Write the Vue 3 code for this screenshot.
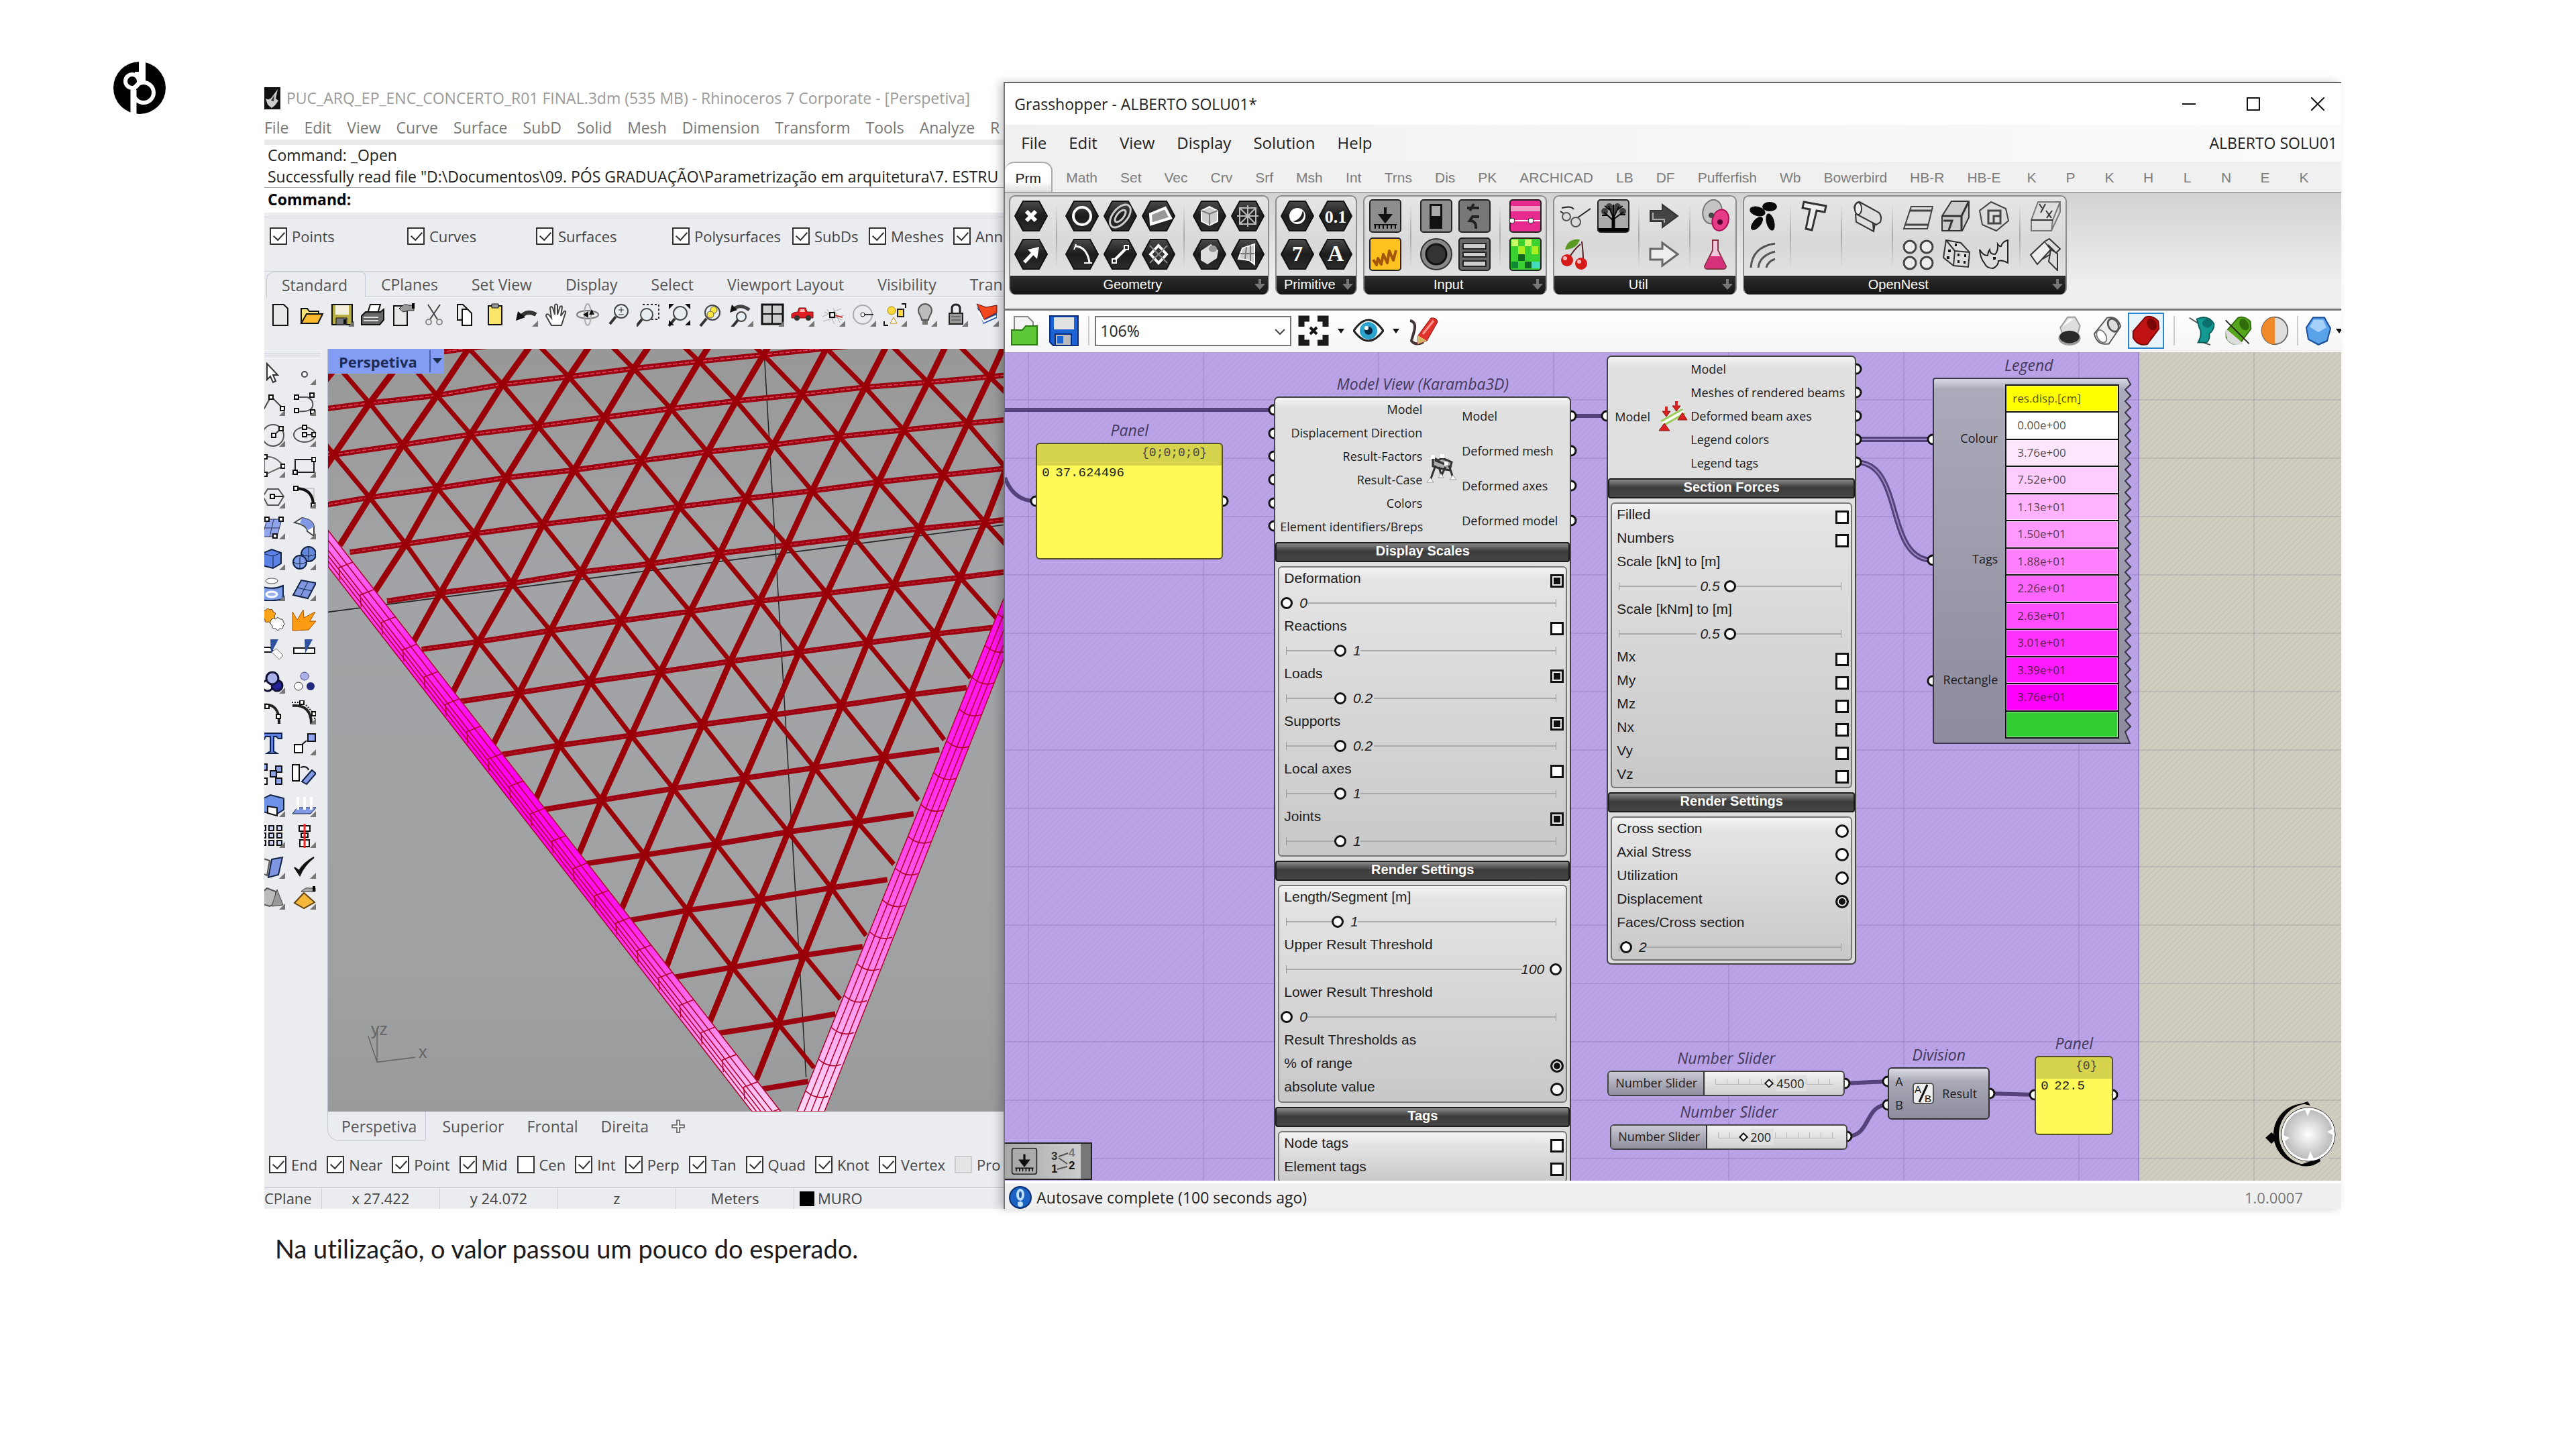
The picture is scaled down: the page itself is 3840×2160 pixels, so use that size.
<script setup>
const menus = ['File', 'Edit', 'View', 'Curve', 'Surface', 'SubD', 'Solid', 'Mesh', 'Dimension', 'Transform', 'Tools', 'Analyze', 'R']
const filters = ['Points', 'Curves', 'Surfaces', 'Polysurfaces', 'SubDs', 'Meshes', 'Ann']
const toolTabs = ['Standard', 'CPlanes', 'Set View', 'Display', 'Select', 'Viewport Layout', 'Visibility', 'Tran']
const viewTabs = ['Perspetiva', 'Superior', 'Frontal', 'Direita']
const snaps = ['End', 'Near', 'Point', 'Mid', 'Cen', 'Int', 'Perp', 'Tan', 'Quad', 'Knot', 'Vertex', 'Pro']
const status = ['x 27.422', 'y 24.072', 'z', 'Meters']

const more = '<path d="M36 27v9h-9z" fill="#777"/>'
const glass = (x, y, r) => `<path d="M${x - r + 2} ${y + r - 2}L${x - r - 7} ${y + r + 9}" stroke="#333" stroke-width="4"/><circle cx="${x}" cy="${y}" r="${r}" fill="#e9eef2" stroke="#444" stroke-width="2"/>`
const sheet = (x, y, w, h, f) => `<path d="M${x} ${y}h${w - 6}l6 6v${h - 6}h-${w}z" fill="${f}" stroke="#111" stroke-width="2"/>`
const toolbar = [
  sheet(7, 3, 22, 31, '#e8e8e8'),
  '<path d="M3 31V9h9l3 4h14v5" fill="#f6e27a" stroke="#111" stroke-width="2"/><path d="M3 31l8-14h24l-7 14z" fill="#fbb92f" stroke="#111" stroke-width="2"/>',
  '<path d="M3 3h30v30H3z" fill="#b7ad45" stroke="#111" stroke-width="2"/><path d="M8 4h20v14H8z" fill="#f3f1dc"/><path d="M9 23h16v10H9z" fill="#777" stroke="#111"/><path d="M20 25h4v7h-4z" fill="#111"/>' + more,
  '<path d="M11 16l4-13h15l-4 13z" fill="#fff" stroke="#111" stroke-width="2"/><path d="M2 20l6-6h22l5-4v16l-6 7H2z" fill="#666" stroke="#111" stroke-width="2"/><path d="M5 22h22M5 27h22" stroke="#ddd" stroke-width="2"/>',
  sheet(4, 5, 20, 29, '#e8e8e8') + '<path d="M12 9q8-9 14-5h8v8h-8l-8 2z" fill="#999" stroke="#222"/><path d="M31 1h4v8h-4z" fill="#000"/>',
  '<path d="M9 3l14 22M27 3L12 25" stroke="#444" stroke-width="2"/><circle cx="10" cy="29" r="4" fill="none" stroke="#888" stroke-width="2"/><circle cx="26" cy="29" r="4" fill="none" stroke="#888" stroke-width="2"/>',
  sheet(7, 3, 14, 23, '#eee') + sheet(14, 10, 14, 24, '#fff'),
  '<path d="M8 5h20v28H8z" fill="#fbe569" stroke="#111" stroke-width="2"/><path d="M13 2h10v6H13z" fill="#999" stroke="#111"/>',
  '<path d="M10 22q9-12 23-4" fill="none" stroke="#333" stroke-width="6"/><path d="M3 27l3-14 11 9z" fill="#111"/>' + more,
  '<path d="M10 34L2 20q0-4 4-2l4 5L8 8q1-4 4 0l3 10V4q2-3 4 0v14l4-12q3-2 3 1l-2 13 5-7q3-1 2 2l-6 19z" fill="#fff" stroke="#444" stroke-width="2"/>',
  '<ellipse cx="18" cy="18" rx="16" ry="6" fill="none" stroke="#777" stroke-width="2"/><ellipse cx="18" cy="18" rx="5" ry="16" fill="none" stroke="#aaa" stroke-width="2"/><path d="M11 18l8-5v10zM24 10l4 8h-8z" fill="#111"/>',
  glass(22, 13, 10) + '<path d="M18 11h8M22 7v8M18 18h8" stroke="#222" stroke-width="1"/>',
  glass(15, 18, 9) + '<path d="M9 3h24v22H22" fill="none" stroke="#222" stroke-width="2" stroke-dasharray="3 3"/>',
  glass(19, 16, 10) + '<path d="M2 2h8l-8 8zM34 2h-8l8 8zM2 34h8l-8-8zM34 34h-8l8-8z" fill="#111"/>',
  glass(21, 15, 11) + '<circle cx="23" cy="11" r="5" fill="#ffe83b" stroke="#555"/><circle cx="18" cy="18" r="5" fill="#ffe83b" stroke="#555"/>',
  '<path d="M6 10q11-9 24 1" fill="none" stroke="#444" stroke-width="5"/><path d="M1 15L4 3l8 8z" fill="#111"/>' + glass(18, 21, 7) + more,
  '<path d="M3 3h31v29H3z" fill="#ccc" stroke="#111" stroke-width="3"/><path d="M18 3v29M3 17h31" stroke="#111" stroke-width="2"/>' + more,
  '<path d="M2 17q4-3 9-3l2-6h10l2 6h9v9H2z" fill="#e01b22" stroke="#711"/><path d="M15 10h6l1 4h-8z" fill="#fbb"/><circle cx="10" cy="23" r="4" fill="#333"/><circle cx="27" cy="23" r="4" fill="#333"/>' + more,
  '<path d="M2 21L30 9M3 28l31-9M9 10l11 22M18 8l10 22M5 14l26 12" stroke="#aaa" stroke-width="1"/><path d="M17 18l15 4" stroke="#c33" stroke-width="2"/><path d="M13 15h7v7h-7z" fill="#fff" stroke="#111" stroke-width="2"/>' + more,
  '<circle cx="16" cy="18" r="14" fill="none" stroke="#aaa" stroke-width="2"/><path d="M18 18h14" stroke="#333" stroke-width="2"/><circle cx="16" cy="18" r="3" fill="#fff" stroke="#111"/>' + more,
  '<circle cx="13" cy="12" r="6" fill="#ffd83b" stroke="#a80"/><path d="M22 10h9v11h-9z" fill="#ffd83b" stroke="#222" stroke-width="2"/><path d="M16 22l5 9H11z" fill="#fff" stroke="#b80"/><path d="M28 2h6v6M2 28v6h6" fill="none" stroke="#111" stroke-width="2"/>' + more,
  '<path d="M13 26c0-6-5-8-5-14a10 10 0 0120 0c0 6-5 8-5 14z" fill="#bbb" stroke="#555" stroke-width="2"/><path d="M14 27h8v6h-8z" fill="#777"/>' + more,
  '<path d="M12 16v-7q0-6 6-6t6 6v7" fill="none" stroke="#222" stroke-width="3"/><path d="M8 16h20v16H8z" fill="#999" stroke="#222" stroke-width="2"/><path d="M11 21h14M11 26h14" stroke="#444" stroke-width="1"/>' + more,
  '<path d="M3 6l10 26 20-9V12L16 20z" fill="#2455a8"/><path d="M5 12l9 16 18-8" fill="none" stroke="#fff" stroke-width="3"/><path d="M3 2l14 5 16-3v11l-19 10z" fill="#f0481c" stroke="#611"/>' + more
]
const nd = (x, y) => `<path d="M${x - 3} ${y - 3}h6v6h-6z" fill="#fff" stroke="#111" stroke-width="2"/>`
const sq = (x, y, f = '#8fa3e6', w = 9) => `<path d="M${x} ${y}h${w}v${w}h-${w}z" fill="${f}" stroke="#111" stroke-width="2"/>`
const tools = [
  '<path d="M9 4v24l5-5 4 9 4-2-4-9h7z" fill="#fff" stroke="#333" stroke-width="2"/>',
  '<circle cx="19" cy="20" r="4" fill="#fff" stroke="#444" stroke-width="2"/>' + more,
  '<path d="M2 30L15 7l18 18" fill="none" stroke="#444" stroke-width="2"/>' + nd(15, 8) + nd(32, 25) + more,
  '<path d="M7 8h16q10 4 8 14-3 9-24 7" fill="none" stroke="#555" stroke-width="2"/>' + nd(7, 8) + nd(30, 5) + nd(7, 28) + nd(31, 30) + more,
  '<circle cx="18" cy="19" r="16" fill="none" stroke="#555" stroke-width="2"/><path d="M19 19l11-10" stroke="#333" stroke-width="2"/>' + nd(19, 19) + nd(30, 9) + more,
  '<ellipse cx="19" cy="18" rx="16" ry="11" fill="none" stroke="#555" stroke-width="2"/><path d="M19 18h14" stroke="#333" stroke-width="2"/>' + nd(19, 7) + nd(19, 18) + nd(33, 18) + more,
  '<path d="M5 32V5q18-2 28 14z" fill="none" stroke="#666" stroke-width="2"/>' + nd(6, 5) + nd(33, 19) + nd(6, 31) + more,
  '<path d="M5 9h28v19H5z" fill="none" stroke="#222" stroke-width="2"/>' + nd(33, 9) + nd(5, 28) + more,
  '<path d="M10 7h16l8 11-8 13H10L3 18z" fill="none" stroke="#555" stroke-width="2"/><path d="M17 18h16" stroke="#222" stroke-width="2"/>' + nd(17, 18) + more,
  '<path d="M6 6h27v26" fill="none" stroke="#aaa"/><path d="M6 6q26 0 26 26" fill="none" stroke="#111" stroke-width="4"/>' + nd(6, 6) + nd(32, 31) + more,
  '<path d="M9 6h22l-7 26H2z" fill="#91a5ea" stroke="#335" stroke-width="1"/><path d="M5 19h23M19 6l-6 26" stroke="#335" stroke-width="1"/>' + nd(9, 6) + nd(30, 6) + nd(21, 31) + more,
  '<path d="M4 11l11-7q16 2 18 13v14l-10-7q0-9-19-13z" fill="#fff" stroke="#444" stroke-width="2"/><path d="M15 4q16 2 18 13l-10 6q-2-9-11-11z" fill="#7f97e6"/>' + more,
  '<path d="M2 11l14-6 14 5v16l-12 7-16-4z" fill="#5c82e6" stroke="#124" stroke-width="2"/><path d="M2 11l16 4 12-5M18 15v18" fill="none" stroke="#124"/>' + more,
  '<circle cx="25" cy="12" r="11" fill="#6488dc" stroke="#124" stroke-width="2"/><circle cx="12" cy="24" r="10" fill="#7d9be6" stroke="#124" stroke-width="2"/><path d="M14 12q11 6 22 0M25 1v22M2 24q10 5 20 0M12 14v20" fill="none" stroke="#124"/>' + more,
  '<ellipse cx="16" cy="6" rx="9" ry="4" fill="#fff" stroke="#444"/><path d="M0 14q18 6 33-1v20q-16 4-33 1z" fill="#7f9eea" stroke="#124" stroke-width="2"/><ellipse cx="16" cy="26" rx="8" ry="4" fill="#9db4ef" stroke="#fff" stroke-width="3"/>' + more,
  '<path d="M14 5l22 4-12 23-22-5z" fill="#7f97e0" stroke="#124" stroke-width="2"/><path d="M8 16l22 5M24 7L13 29" stroke="#124"/>' + more,
  '<path d="M3 8q-2-6 4-4 2-5 6-1 5-2 5 3 6 1 2 6 2 6-3 6 0 6-6 3-6 2-5-4-6-2-3-9z" fill="#f9a51a" stroke="#742"/><path d="M15 18q4-4 7-1 3-5 6 0 6-1 5 4 4 3 0 6 0 6-5 4-3 5-6 0-6 1-5-4-5-4-2-9z" fill="#fff" stroke="#333"/>',
  '<path d="M1 34V6l7 12L17 3l1 12 17-9-8 14 9 0-11 13z" fill="#fb9c14" stroke="#a50"/>',
  '<path d="M0 13h14l5 7H0z" fill="#fff" stroke="#111" stroke-width="2"/><path d="M14 1h12L15 22z" fill="#2f52a0"/><path d="M16 20l7-5 10 10-6 6z" fill="#fff" stroke="#777"/>',
  '<path d="M3 14h31v8H3z" fill="#fff" stroke="#111" stroke-width="2"/><path d="M19 1h12L20 22z" fill="#2f52a0"/>',
  '<circle cx="10" cy="24" r="8" fill="#fff" stroke="#113" stroke-width="3"/><circle cx="24" cy="24" r="8" fill="#229" stroke="#113" stroke-width="3"/><circle cx="17" cy="13" r="9" fill="#aab0ea" stroke="#113" stroke-width="3"/>' + more,
  '<circle cx="19" cy="10" r="6" fill="#aab0ea" stroke="#448"/><circle cx="10" cy="25" r="6" fill="#fff" stroke="#333"/><circle cx="28" cy="25" r="6" fill="#22287c"/>',
  '<path d="M2 7q26-4 25 28" fill="none" stroke="#222" stroke-width="4"/>' + nd(9, 9) + nd(26, 24),
  '<path d="M1 8q28-2 28 27" fill="none" stroke="#222" stroke-width="4"/><path d="M0 3h16M21 7l13 14v14" fill="none" stroke="#222" stroke-width="2" stroke-dasharray="2 2"/>' + nd(15, 3) + nd(33, 20) + more,
  '<path d="M1 3h30v8h-5l-3-3h-4v22l5 3H9l5-3V8H7l-2 4H1z" fill="#5f82e0" stroke="#124" stroke-width="2"/>',
  '<path d="M4 20h12v12H4zM24 4h11v11H24z" fill="#fff" stroke="#111" stroke-width="2"/><path d="M25 5h9v9h-9z" fill="#93a8ec"/><path d="M15 20l7-6" stroke="#111" stroke-width="2"/>' + more,
  sq(0, 3) + sq(22, 6) + sq(14, 13) + sq(0, 24, '#fff') + sq(22, 24),
  '<path d="M1 4h10v24H1z" fill="#fff" stroke="#111" stroke-width="2"/><path d="M13 8q10-3 12 4" fill="none" stroke="#111" stroke-width="2"/><path d="M15 29l15-17 6 5-14 16z" fill="#8299e6" stroke="#124" stroke-width="2"/>',
  '<path d="M0 10l14-7 20 5v17l-13 8-21-6z" fill="#6e90e6" stroke="#124" stroke-width="2"/><path d="M10 20l14 2v12l-14-4z" fill="#fff" stroke="#111" stroke-width="2"/>' + more,
  '<path d="M8 22h28l-8 9H1z" fill="#8299e6" stroke="#124"/><path d="M9 25V6M19 25V6M29 25V6" stroke="#fff" stroke-width="4"/>' + more,
  [0, 12, 24].map(x => [3, 14, 25].map(y => sq(x, y, '#cfd6f5', 7)).join('')).join('') + more,
  '<path d="M11 3h16v8H11zM14 14h10v6H14zM12 24h14v10H12z" fill="#fff" stroke="#111" stroke-width="2"/><path d="M19 0v36" stroke="#f22" stroke-width="3"/>' + more,
  '<path d="M1 5l12 4-4 22-9-4z" fill="#eee" stroke="#555" stroke-width="2"/><path d="M16 7l16-3-6 26-15 4z" fill="#7f97e0" stroke="#124" stroke-width="2"/>' + more,
  '<path d="M4 19l8 12Q18 16 33 4 18 12 11 24z" fill="#111" stroke="#111" stroke-width="2"/>' + more,
  '<path d="M0 12l9-8 13 5v17l-9 5-13-4z" fill="#bbb" stroke="#555" stroke-width="2"/><path d="M24 6l9 23-17 2z" fill="#999" stroke="#444"/>' + more,
  '<path d="M4 26l14-15 16 14-16 9z" fill="#f5b83a" stroke="#641" stroke-width="2"/><path d="M14 9q7-7 12-5h9v5h-9z" fill="#aaa" stroke="#333"/><path d="M31 1h4v8h-4z" fill="#000"/>' + more
]

/* lattice nodes, apex row first; each entry lists x,y pairs from left to right */
const lattice = [
  [1055, 1208],
  [962, 1105, 1107, 1083],
  [872, 1001, 1018, 982, 1162, 960],
  [785, 900, 930, 880, 1075, 858, 1215, 840],
  [698, 800, 843, 779, 987, 760, 1128, 741, 1268, 722],
  [613, 700, 758, 682, 902, 662, 1043, 645, 1183, 627, 1322, 608],
  [532, 604, 675, 584, 817, 566, 958, 547, 1097, 530, 1235, 513, 1372, 497],
  [450, 511, 595, 491, 737, 473, 877, 456, 1017, 437, 1153, 423, 1288, 408, 1422, 394],
  [373, 422, 517, 405, 657, 384, 797, 369, 937, 350, 1072, 335, 1207, 320, 1340, 305, 1472, 293],
  [303, 333, 442, 314, 580, 297, 717, 282, 855, 265, 990, 250, 1123, 236, 1257, 220, 1388, 207, 1515, 195],
  [230, 248, 367, 231, 505, 212, 643, 198, 778, 181, 912, 165, 1045, 152, 1178, 137, 1308, 125, 1437, 113, 1563, 102],
  [158, 170, 297, 152, 434, 133, 570, 118, 704, 102, 838, 86, 970, 72, 1102, 60, 1230, 47, 1357, 38, 1482, 28, 1606, 17],
  [90, 92, 230, 76, 366, 62, 498, 42, 632, 28, 763, 13, 895, 0, 1025, -12, 1152, -24, 1277, -35, 1402, -45, 1524, -55, 1640, -64],
  [28, 24, 165, 8, 300, -8, 430, -24, 562, -38, 692, -52, 822, -64, 950, -76, 1076, -88, 1200, -99, 1324, -109, 1446, -119, 1564, -128, 1680, -136]
].map(r => r.reduce((a, v, i) => (i % 2 ? a[a.length - 1].push(v) : a.push([v]), a), []))
const rowStart = [[935, 1225], [845, 1123], [750, 1020], [665, 916], [583, 817], [497, 717], [413, 620], [335, 525], [265, 437], [190, 348], [100, 268], [60, 184], [20, 102], [-20, 30]]
const rowEnd = [[1170, 1190], [1225, 1067], [1275, 945], [1328, 825], [1380, 708], [1435, 595], [1490, 485], [1540, 381], [1600, 279]]
const riseStart = [[1010, 1310], [915, 1208], [828, 1107], [738, 1000], [650, 903], [563, 803], [480, 697], [397, 605], [318, 512], [240, 420], [170, 335], [98, 252], [30, 170], [-30, 100]]
const fallEnd = [[1127, 1288], [1180, 1163], [1232, 1047], [1288, 917], [1338, 800], [1390, 690], [1443, 577], [1495, 468], [1545, 365], [1600, 272], [1640, 180], [1680, 95], [1700, 10], [1760, -60]]
const pts = a => a.map(p => p.join(',')).join(' ')
const rows = lattice.map((r, i) => pts([rowStart[i], ...r, ...(rowEnd[i] ? [rowEnd[i]] : [])]))
rows.unshift('1022,1327 1115,1313')
const rises = lattice.map((_, s) => pts([riseStart[s], ...lattice.slice(s).map((r, k) => r[k])]))
const falls = lattice.map((_, j) => pts([fallEnd[j], ...lattice.slice(j).map(r => r[j])]))
const ribs = Array.from({ length: 21 }, (_, i) => {
  const t = i * 43 + 50
  return `M${146 + t} ${308 + t * 1.16}l-28 10l2 22`
}).join('')
const ribsRight = Array.from({ length: 16 }, (_, i) => {
  const y = 460 + i * 58
  const x = 1511 - (y - 430) * 0.446
  return `M${x} ${y}q22 18 46 10`
}).join('')

const ghMenus = ['File', 'Edit', 'View', 'Display', 'Solution', 'Help']
const ghTabs = ['Prm', 'Math', 'Set', 'Vec', 'Crv', 'Srf', 'Msh', 'Int', 'Trns', 'Dis', 'PK', 'ARCHICAD', 'LB', 'DF', 'Pufferfish', 'Wb', 'Bowerbird', 'HB-R', 'HB-E', 'K', 'P', 'K', 'H', 'L', 'N', 'E', 'K']
const hex = s => `<path d="M13 3h24l12 22-12 22H13L1 25z" fill="url(#hexfill)" stroke="#111" stroke-width="2"/>${s}`
const tile = (f, s) => `<rect x="2" y="1" width="46" height="48" rx="4" fill="${f}" stroke="#222" stroke-width="2"/>${s}`
const glyph = (t, size) => `<text x="25" y="35" font-family="Liberation Serif, serif" font-weight="bold" font-size="${size}" fill="#fff" text-anchor="middle">${t}</text>`
const slider = '<path d="M25 12v17M18 24l7 9 7-9z" fill="#111" stroke="#111" stroke-width="4"/><path d="M8 38h34M10 38v6M16 38v6M22 38v6M28 38v6M34 38v6M40 38v6" stroke="#111" stroke-width="2"/>'
const ribbon = [
  { name: 'Geometry', groups: [
    [hex('<path d="M18 18l14 14M32 18L18 32" stroke="#fff" stroke-width="6"/>'), hex('<path d="M15 37l14-15" stroke="#fff" stroke-width="5"/><path d="M20 18l17-4-3 18z" fill="#fff"/>')],
    null,
    [hex('<circle cx="25" cy="25" r="13" fill="none" stroke="#fff" stroke-width="4"/>'), hex('<path d="M14 13q18 0 22 24" fill="none" stroke="#fff" stroke-width="3"/><path d="M28 38h12M13 18l3-8" stroke="#fff" stroke-width="2"/>')],
    [hex('<g transform="rotate(-50 25 25)" fill="none" stroke="#ccc" stroke-width="3"><ellipse cx="25" cy="25" rx="20" ry="11"/><ellipse cx="25" cy="25" rx="11" ry="5"/></g>'), hex('<path d="M16 34l18-18" stroke="#fff" stroke-width="4"/><path d="M13 32h6v6h-6zM31 12h6v6h-6z" fill="#222" stroke="#fff" stroke-width="2"/>')],
    [hex('<path d="M13 22l22-9 8 15-29 9z" fill="#999" stroke="#fff" stroke-width="4"/>'), hex('<path d="M25 12l12 13-12 13-12-13z" fill="#333" stroke="#fff" stroke-width="4"/><path d="M12 12l26 26M38 12L12 38" stroke="#888" stroke-width="2"/>')],
    null,
    [hex('<path d="M13 17l12-6 12 6v16l-12 6-12-6z" fill="#ccc" stroke="#fff" stroke-width="2"/><path d="M13 17l12 5 12-5M25 22v17" fill="none" stroke="#777" stroke-width="2"/>'), hex('<path d="M12 20l15-10 11 9-2 12-14 9-10-6z" fill="#ddd"/><ellipse cx="30" cy="17" rx="6" ry="5" fill="#999"/>')],
    [hex('<path d="M13 13h24v24H13zM25 9v32M9 25h32M13 13l24 24M37 13L13 37" fill="none" stroke="#bbb" stroke-width="2"/>'), hex('<path d="M17 16l18-6v30l-8-6-16-2z" fill="#ccc" stroke="#fff" stroke-width="2"/><path d="M23 14l-2 18M29 12v23M14 24h21" stroke="#777" stroke-width="2"/>')]
  ] },
  { name: 'Primitive', groups: [
    [hex('<circle cx="25" cy="25" r="12" fill="#fff"/><path d="M33 17a12 11 0 01-15 16q12-2 15-16z" fill="#222"/>'), hex(glyph('7', 32))],
    [hex(glyph('0.1', 26)), hex(glyph('A', 34))]
  ] },
  { name: 'Input', groups: [
    [tile('#8d8d8d', slider), tile('#fcc21f', '<path d="M7 33l5 8 2-10 5 9 3-15 6 13 3-18 6 14 4-15" fill="none" stroke="#a3560c" stroke-width="4" stroke-linejoin="round"/>')],
    null,
    [tile('#8d8d8d', '<path d="M15 7h19v37H15z" fill="#111"/><path d="M18 10h13v15H18z" fill="#aaa"/>'), '<circle cx="25" cy="25" r="23" fill="#888" stroke="#333" stroke-width="2"/><circle cx="25" cy="25" r="15" fill="#333" stroke="#111" stroke-width="3"/>'],
    [tile('#777', '<path d="M14 13h18M24 7l-6 10M32 26H22l-4 6q10 0 9 12" fill="none" stroke="#222" stroke-width="4"/>'), tile('#666', '<path d="M8 9h34v8H8zM8 22h34v7H8zM8 35h34v8H8z" fill="#ccc" stroke="#222" stroke-width="2"/>')],
    null,
    [tile('#e62a8e', '<path d="M3 10h44v8H3z" fill="#f0a0c8"/><path d="M3 32h44" stroke="#fff" stroke-width="2"/><circle cx="5" cy="32" r="4" fill="#fff" stroke="#222"/><circle cx="33" cy="32" r="4" fill="#fff" stroke="#222"/>'), tile('#3bd130', '<path d="M4 3h10v10H4zM24 3h10v10H24z" fill="#cf6"/><path d="M14 13h10v12H14zM34 13h10v12H34z" fill="#ae2"/><path d="M14 25h10v10H14zM24 36h10v10H24z" fill="#162"/><path d="M4 36h10v10H4z" fill="#183"/><path d="M34 36h12v10H34z" fill="#4db"/>')]
  ] },
  { name: 'Util', groups: [
    ['<path d="M3 18l12 8M5 13q14-4 18 2M28 28l20-14" stroke="#222" stroke-width="2" fill="none"/><circle cx="12" cy="26" r="6" fill="#ddd" stroke="#555" stroke-width="2"/><circle cx="26" cy="34" r="7" fill="#ddd" stroke="#555" stroke-width="2"/>', '<path d="M35 6q2 16 2 26M33 10q-10 8-18 22" fill="none" stroke="#522" stroke-width="2"/><path d="M10 18Q14 1 32 3 28 17 10 18z" fill="#5a9a22"/><circle cx="13" cy="34" r="9" fill="#d61a1a"/><circle cx="34" cy="39" r="9" fill="#d61a1a"/><circle cx="10" cy="31" r="3" fill="#fbb"/><circle cx="31" cy="36" r="3" fill="#fbb"/>'],
    [tile('#aaa', '<path d="M3 43h44v5H3z" fill="#000"/><path d="M25 45V27" stroke="#000" stroke-width="5"/><path d="M25 32L11 19M25 30l15-11M25 28l-7-18M25 28l8-17M25 28V8M16 24H8M35 23h8M20 16l-8-6M31 16l8-6" stroke="#000" stroke-width="2"/><g fill="#111" fill-opacity="0.7"><circle cx="12" cy="18" r="5"/><circle cx="19" cy="11" r="5"/><circle cx="31" cy="11" r="5"/><circle cx="39" cy="18" r="5"/><circle cx="25" cy="18" r="5"/></g>'), ''],
    null,
    ['<path d="M4 17h18V8l23 17-23 17v-9H4z" fill="#444" stroke="#333" stroke-width="2"/><path d="M8 20v10h17v5" fill="none" stroke="#aaa" stroke-width="2"/>', '<path d="M4 17h18V8l23 17-23 17v-9H4z" fill="#eee" stroke="#666" stroke-width="3"/>'],
    null,
    ['<g transform="rotate(15 25 25)"><ellipse cx="19" cy="20" rx="14" ry="18" fill="#c4c4c4" stroke="#777" stroke-width="2"/><ellipse cx="34" cy="29" rx="12" ry="16" fill="#e63b86" stroke="#a15" stroke-width="2"/></g><circle cx="19" cy="24" r="4" fill="#444"/><circle cx="32" cy="34" r="4" fill="#503"/>', '<path d="M21 4h8v15l12 24q0 4-5 4H14q-5 0-5-4l12-24z" fill="#f2c8dd" stroke="#834" stroke-width="2"/><path d="M17 28h16l7 15q0 3-4 3H14q-4 0-4-3z" fill="#d6307c"/>']
  ] },
  { name: 'OpenNest', groups: [
    ['<g fill="#0a0a0a"><ellipse cx="14" cy="18" rx="12" ry="7" transform="rotate(15 14 18)"/><ellipse cx="32" cy="11" rx="11" ry="7"/><ellipse cx="13" cy="36" rx="12" ry="6" transform="rotate(-50 13 36)"/><ellipse cx="33" cy="34" rx="13" ry="6" transform="rotate(75 33 34)"/></g>', '<path d="M4 45Q6 14 40 9M15 45q2-18 25-24M27 45q2-9 13-13" fill="none" stroke="#555" stroke-width="3"/>'],
    null,
    ['<path d="M7 4l33 6-2 9-12-2-7 29-9-2 6-29-11-2z" fill="#eee" stroke="#333" stroke-width="3"/>', ''],
    null,
    ['<path d="M6 12q2-8 8-8l29 16q5 6 2 14l-6 4L9 22z" fill="#ddd" stroke="#333" stroke-width="2"/><path d="M8 22l1 12 26 14-1-12M35 48l2-12" fill="none" stroke="#333" stroke-width="2"/><ellipse cx="12" cy="14" rx="5" ry="9" fill="#eee" stroke="#333" stroke-width="2"/>', ''],
    null,
    ['<path d="M15 11h32l-8 33H4z" fill="#ddd" stroke="#444" stroke-width="2"/><path d="M13 17h32M6 38h34" stroke="#444" stroke-width="3"/>', '<g fill="#eee" stroke="#444" stroke-width="3"><circle cx="13" cy="14" r="9"/><circle cx="38" cy="14" r="9"/><circle cx="13" cy="38" r="9"/><circle cx="38" cy="38" r="9"/></g>'],
    ['<path d="M4 25L18 3h26v24L34 47H4z" fill="#ccc" stroke="#333" stroke-width="2"/><path d="M4 25h29l11-22M33 25v22M6 32h13l-5 14" fill="none" stroke="#333" stroke-width="3"/>', '<path d="M10 4l22 4 13 14-2 22-22-2L6 30z" fill="#ddd" stroke="#333" stroke-width="2"/><path d="M10 4l13 16 22 2M23 20l-2 22" fill="none" stroke="#333" stroke-width="2"/><path d="M27 26h3M37 27h3M27 36h3M36 37h3M15 18v4M13 28v4M23 11h3" stroke="#111" stroke-width="4"/>'],
    ['<path d="M20 4l22 10 4 18-18 15-21-9-4-21z" fill="#ddd" stroke="#444" stroke-width="2"/><path d="M16 17h18v19H16zM24 36V25h10" fill="none" stroke="#444" stroke-width="3"/>', '<path d="M3 18q5 9 12 9 0-5 3-9 0 7 8 7 5-5 4-15 3 4 5 3 2-7 10-9v34q-8-5-14-3 0 7-8 11-10 0-13-8-6-7-7-20z" fill="#ddd" stroke="#222" stroke-width="2"/><path d="M23 31h4" stroke="#111" stroke-width="4"/>'],
    null,
    ['<path d="M14 4h33L36 31H4zM4 31v16h30l13-28V4M36 31l-2 16" fill="#ddd" stroke="#777" stroke-width="2"/><path d="M4 31h32M16 7l4 6m5-6l-7 13M26 17l8 11M35 17l-8 11" stroke="#333" stroke-width="2"/>', '<path d="M3 26L24 6l9 12-20 22z" fill="#eee" stroke="#333" stroke-width="2"/><path d="M24 6l7-4 16 15-6 6-12-12M33 18l10 6v25L30 36l3-18M21 32l10-6" fill="#ddd" stroke="#333" stroke-width="2"/>']
  ] }
]

const capsule = (a, b) => `<path d="M5 26L24 4q10-4 20 6l1 12-18 24q-14 4-22-10z" fill="${a}" stroke="${b}" stroke-width="2"/><ellipse cx="34" cy="15" rx="7" ry="10" fill="${b}" transform="rotate(-30 34 15)"/>`
const previews = [
  '<path d="M10 20L22 3h12l8 14-4 14H14z" fill="#ddd" stroke="#999" stroke-width="2"/><path d="M14 18l10-12h8z" fill="#fff"/><ellipse cx="25" cy="37" rx="18" ry="12" fill="#999"/><ellipse cx="25" cy="35" rx="16" ry="10" fill="#2a2a2a"/>',
  '<path d="M3 30L24 4q16-4 22 14L27 46Q8 50 3 30z" fill="#eee" stroke="#555" stroke-width="2"/><ellipse cx="34" cy="16" rx="8" ry="11" fill="#ddd" stroke="#555" stroke-width="3" transform="rotate(-30 34 16)"/><ellipse cx="15" cy="34" rx="7" ry="11" fill="#fff" stroke="#777" stroke-width="2" transform="rotate(-30 15 34)"/>'
]
const previewsB = [
  '<path d="M4 4l16 10q6 14 0 28l18 6" stroke="#555" stroke-width="2" fill="none"/><path d="M16 6q18-8 28 8 0 10-8 16 2 8-4 14H18q8-14 2-24z" fill="#149a92" stroke="#0a5a58" stroke-width="2"/><ellipse cx="33" cy="13" rx="8" ry="7" fill="#0b6f6b"/>',
  capsule('#56a61c', '#2f6d0a') + '<path d="M5 22l28 24q-16 6-26-6-4-10-2-18z" fill="#ddd"/><path d="M4 8l38 38" stroke="#222" stroke-width="2"/>',
  '<ellipse cx="25" cy="25" rx="21" ry="22" fill="#ddd" stroke="#666" stroke-width="2"/><path d="M25 3a21 22 0 000 44z" fill="#f0892a"/>'
]

const check = (label, on) => ({ type: 'checkbox', label, on })
const text = label => ({ type: 'text', label })
const range = (v, value, side = 'after') => ({ type: 'range', v, value, side })
const radio = (label, on) => ({ type: 'radio', label, on })
const modelView = [
  { title: 'Display Scales', rows: [check('Deformation', true), range(0, '0'), check('Reactions'), range(20, '1'), check('Loads', true), range(20, '0.2'), check('Supports', true), range(20, '0.2'), check('Local axes'), range(20, '1'), check('Joints', true), range(20, '1')] },
  { title: 'Render Settings', rows: [text('Length/Segment [m]'), range(19, '1'), text('Upper Result Threshold'), range(100, '100', 'before'), text('Lower Result Threshold'), range(0, '0'), text('Result Thresholds as'), radio('% of range', true), radio('absolute value')] },
  { title: 'Tags', rows: [check('Node tags'), check('Element tags')] }
]
const beamView = [
  { title: 'Section Forces', rows: [check('Filled'), check('Numbers'), text('Scale [kN] to [m]'), range(50, '0.5', 'before'), text('Scale [kNm] to [m]'), range(50, '0.5', 'before'), check('Mx'), check('My'), check('Mz'), check('Nx'), check('Vy'), check('Vz')] },
  { title: 'Render Settings', rows: [radio('Cross section'), radio('Axial Stress'), radio('Utilization'), radio('Displacement', true), text('Faces/Cross section'), range(3, '2')] }
]
const nodes = [
  { id: 'model', sections: modelView, inputs: ['Model', 'Displacement Direction', 'Result-Factors', 'Result-Case', 'Colors', 'Element identifiers/Breps'], outputs: ['Model', 'Deformed mesh', 'Deformed axes', 'Deformed model'] },
  { id: 'beam', sections: beamView, inputs: ['Model'], outputs: ['Model', 'Meshes of rendered beams', 'Deformed beam axes', 'Legend colors', 'Legend tags'] }
]
const nodeIcons = {
  model: '<path d="M9 8l8 4 6-3 14 6-3 12-16-3-9-3z" fill="#aaa" stroke="#333" stroke-width="3"/><path d="M13 20L5 42M33 20l6 18M18 22l4 14M28 22l-6 12M12 12l20 8" stroke="#333" stroke-width="3"/><path d="M5 38l5 7H0zM39 34l5 7H34zM21 32l4 6h-8z" fill="#fff" stroke="#999"/><path d="M6 4h6v6H6zM20 3h6v6h-6zM26 14h6v6h-6z" fill="#fff"/>',
  beam: '<path d="M6 34L38 16" stroke="#9c5" stroke-width="10"/><path d="M6 34L38 16" stroke="#fff" stroke-width="4"/><g fill="#d22" stroke="#811"><path d="M9 34l8 11H1zM36 18l7 11H29zM27 16l-6-8h12zM12 24l-6-8h12z"/></g><path d="M27 1v9M12 9v9" stroke="#d22" stroke-width="4"/>'
}
const stop = (r, off) => `calc(9px + (100% - 18px) * ${r.v / 100} + ${off}px)`
const trackStyle = r => {
  const w = r.value.length * 10 + 20
  return r.side === 'after' ? { '--a': stop(r, -6), '--b': stop(r, w) } : { '--a': stop(r, -w), '--b': stop(r, 6) }
}
const valueStyle = r => {
  const c = `(100% - 27px) * ${r.v / 100}`
  return r.side === 'after' ? { left: `calc(30px + ${c})` } : { right: `calc(100% - 13px - ${c} + 16px)` }
}
const legend = [
  ['res.disp.[cm]', '#ffff00'], ['0.00e+00', '#ffffff'], ['3.76e+00', '#ffe6ff'], ['7.52e+00', '#ffccff'], ['1.13e+01', '#ffb3ff'], ['1.50e+01', '#ff99ff'], ['1.88e+01', '#ff80ff'],
  ['2.26e+01', '#ff66ff'], ['2.63e+01', '#ff4dff'], ['3.01e+01', '#ff33ff'], ['3.39e+01', '#ff1aff'], ['3.76e+01', '#ff00ff'], ['', '#33cc33']
]
const teeth = 'M4 1H290' + Array.from({ length: 31 }, (_, i) => `L295 ${10 + i * 17}L287 ${18 + i * 17}`).join('') + 'L294 545H4Q1 545 1 542V4Q1 1 4 1z'
const grips = [[1545, 747], [1824, 747], ...[611, 646, 680, 715, 750, 784].map(y => [1900, y]), ...[620, 672, 724, 776].map(y => [2343, y]), [2396, 620], ...[550, 585, 620, 655, 689].map(y => [2768, y]), [2882, 655], [2882, 835], [2882, 1015], [2751, 1615], [2754, 1694], [2815, 1612], [2815, 1647], [2967, 1630], [3034, 1632], [3150, 1632]]
</script>

<template>
  <div class="page">
    <svg class="logo" viewBox="0 0 78 78" role="img" aria-label="Logo">
      <circle cx="39" cy="39" r="39" fill="#000" />
      <g fill="none" stroke="#fff">
        <path d="M43 0v32" stroke-width="10" />
        <path d="M30 42v36" stroke-width="9" />
        <circle cx="28" cy="29" r="10" stroke-width="6" />
        <circle cx="45" cy="46" r="15" stroke-width="6" />
      </g>
      <path d="M32 15h8v6h-8z" fill="#fff" />
    </svg>

    <main class="desk">
      <div class="workspace">
        <section class="rhino">
          <header class="r-title">
            <svg width="24" height="33" viewBox="0 0 24 33"><path d="M0 0h24v33H0z" fill="#111" /><path d="M2 17q6 3 9-2L20 3l-3 14 4 3-5 7-5 4-6-5z" fill="#ccc" /><path d="M10 20l5-8-1 9z" fill="#333" /></svg>
            <span>PUC_ARQ_EP_ENC_CONCERTO_R01 FINAL.3dm (535 MB) - Rhinoceros 7 Corporate - [Perspetiva]</span>
          </header>
          <nav class="r-menu"><button v-for="m in menus" :key="m">{{ m }}</button></nav>
          <div class="r-log">
            <p>Command: _Open</p>
            <p>Successfully read file "D:\Documentos\09. PÓS GRADUAÇÃO\Parametrização em arquitetura\7. ESTRU</p>
          </div>
          <div class="r-command"><label for="command">Command:</label><input id="command" type="text" /></div>
          <div class="r-filters">
            <label v-for="f in filters" :key="f" class="tick"><input type="checkbox" checked />{{ f }}</label>
          </div>
          <div class="r-tabs"><button v-for="(t, i) in toolTabs" :key="t" :class="{ active: !i }">{{ t }}</button></div>
          <div class="r-toolbar">
            <button v-for="(t, i) in toolbar" :key="i" aria-label="Tool"><svg width="36" height="36" viewBox="0 0 36 36" fill="none" v-html="t" /></button>
          </div>
          <div class="r-body">
            <aside class="r-tools">
              <button v-for="(t, i) in tools" :key="i" aria-label="Tool"><svg width="36" height="36" viewBox="0 0 36 36" fill="none" v-html="t" /></button>
            </aside>
            <div class="viewport">
              <svg class="scene" viewBox="146 -23 1364 1391" preserveAspectRatio="none" fill="none">
                <defs>
                  <linearGradient id="beamL" x1="0" y1="0" x2="0" y2="1">
                    <stop offset="0" stop-color="#ff7df2" /><stop offset="0.2" stop-color="#ff2bf6" /><stop offset="0.4" stop-color="#ff00f5" />
                    <stop offset="0.65" stop-color="#ff12f0" /><stop offset="0.82" stop-color="#ff70ee" /><stop offset="1" stop-color="#ffd2f8" />
                  </linearGradient>
                  <linearGradient id="beamR" x1="0" y1="0" x2="0" y2="1">
                    <stop offset="0" stop-color="#ff10f0" /><stop offset="0.3" stop-color="#ff20ee" /><stop offset="0.6" stop-color="#ff62ea" /><stop offset="1" stop-color="#ffd8f8" />
                  </linearGradient>
                </defs>
                <path d="M1026 -23L1111 1305M146 457L1511 298" stroke="#222" stroke-width="2" />
                <g stroke="#9c0310">
                  <polyline v-for="(p, i) in rows" :key="'r' + i" :points="p" stroke-width="10" />
                </g>
                <g stroke="#dd4058" stroke-width="2">
                  <polyline v-for="(p, i) in rows.slice(5)" :key="'t' + i" :points="p" stroke-dasharray="9 3" :stroke-opacity="Math.min(1, 0.2 + i / 9)" />
                </g>
                <g stroke="#9a0008">
                  <polyline v-for="(p, i) in rises" :key="'u' + i" :points="p" stroke-width="12" />
                  <polyline v-for="(p, i) in falls" :key="'f' + i" :points="p" stroke-width="9" />
                </g>
                <path d="M146 308L1060 1368H1002L146 374z" fill="url(#beamL)" stroke="#b0002a" stroke-width="2" />
                <path d="M146 326L1043 1368M146 344L1030 1368M146 354L1020 1368M146 364L1011 1368" stroke="#b0002a" stroke-width="2" />
                <path :d="ribs" stroke="#b0002a" stroke-width="2" />
                <path d="M1511 430L1093 1368H1148L1511 540z" fill="url(#beamR)" stroke="#b0002a" stroke-width="2" />
                <path d="M1511 459L1107 1368M1511 487L1121 1368M1511 514L1135 1368" stroke="#b0002a" stroke-width="2" />
                <path :d="ribsRight" stroke="#b0002a" stroke-width="2" />
                <path d="M245 1216V1278L322 1269M245 1278L227 1230" stroke="#666" stroke-width="2" />
              </svg>
              <div class="view-label"><strong>Perspetiva</strong><button aria-label="Viewport menu"></button></div>
              <span class="axis-yz">yz</span><span class="axis-x">x</span>
            </div>
          </div>
          <div class="r-viewtabs">
            <button v-for="(t, i) in viewTabs" :key="t" :class="{ active: !i }">{{ t }}</button>
            <button aria-label="Add layout"><svg width="20" height="20" viewBox="0 0 20 20"><path d="M8 1h4v7h7v4h-7v7H8v-7H1V8h7z" fill="#fff" stroke="#777" stroke-width="2" /></svg></button>
          </div>
          <div class="r-snaps">
            <label v-for="s in snaps" :key="s" class="tick"><input type="checkbox" :checked="s !== 'Cen' && s !== 'Pro'" :disabled="s === 'Pro'" />{{ s }}</label>
          </div>
          <footer class="r-status"><span>CPlane</span><span v-for="s in status" :key="s">{{ s }}</span><span><i></i>MURO</span></footer>
        </section>

        <section class="gh">
          <header class="g-title">
            <span>Grasshopper - ALBERTO SOLU01*</span>
            <div>
              <button aria-label="Minimize"><svg width="20" height="20"><path d="M0 10h20" stroke="#111" stroke-width="2" /></svg></button>
              <button aria-label="Maximize"><svg width="20" height="20"><path d="M1 1h18v18H1z" fill="none" stroke="#111" stroke-width="2" /></svg></button>
              <button aria-label="Close"><svg width="20" height="20"><path d="M0 0l20 20M20 0L0 20" stroke="#111" stroke-width="2" /></svg></button>
            </div>
          </header>
          <nav class="g-menu"><button v-for="m in ghMenus" :key="m">{{ m }}</button><span>ALBERTO SOLU01</span></nav>
          <div class="g-tabs"><button v-for="(t, i) in ghTabs" :key="i" :class="{ active: !i }">{{ t }}</button></div>
          <div class="g-ribbon">
            <svg width="0" height="0" class="defs"><linearGradient id="hexfill" x1="0" y1="0" x2="0" y2="1"><stop offset="0" stop-color="#4a4a4a" /><stop offset="0.5" stop-color="#1c1c1c" /><stop offset="1" stop-color="#2c2c2c" /></linearGradient></svg>
            <div v-for="p in ribbon" :key="p.name" class="g-panel">
              <div class="g-cells">
                <template v-for="(c, i) in p.groups" :key="i">
                  <div v-if="c" class="g-col">
                    <button v-for="(s, k) in c" :key="k" aria-label="Component"><svg width="50" height="50" viewBox="0 0 50 50" fill="none" v-html="s" /></button>
                  </div>
                  <span v-else class="g-sep"></span>
                </template>
              </div>
              <div class="g-name"><span>{{ p.name }}</span><svg width="16" height="18" viewBox="0 0 16 18"><path d="M6 1h4v7h6l-8 9-8-9h6z" fill="#777" /></svg></div>
            </div>
          </div>
          <div class="g-bar">
            <button aria-label="Open"><svg width="40" height="46" viewBox="0 0 40 46"><path d="M5 22V2h20l8 8v20H5z" fill="#f4f4f4" stroke="#888" stroke-width="2" /><path d="M1 22h16l5-6h17v28H1z" fill="#5cc83a" stroke="#2b7a12" stroke-width="2" /></svg></button>
            <button aria-label="Save" class="save"><svg width="46" height="46" viewBox="0 0 46 46"><path d="M2 1h42v44H7l-5-5z" fill="#1c63d6" stroke="#0b2c78" stroke-width="2" /><path d="M8 3h30v18H8z" fill="#e2e2e2" /><path d="M10 28h24v17H10z" fill="#bbb" stroke="#0b2c78" stroke-width="2" /><path d="M13 31h9v11h-9z" fill="#1c63d6" /></svg></button>
            <span class="rule"></span>
            <div class="zoom">
              <select aria-label="Zoom"><option>106%</option></select>
              <svg width="16" height="10"><path d="M1 1l7 7 7-7" fill="none" stroke="#444" stroke-width="2" /></svg>
            </div>
            <button aria-label="Zoom extents"><svg width="46" height="46" viewBox="0 0 46 46"><path d="M5 17V5h12M29 5h12v12M41 29v12H29M17 41H5V29" fill="none" stroke="#1a1a1a" stroke-width="9" /><path d="M18 18l10 10M28 18L18 28" stroke="#111" stroke-width="4" /></svg></button>
            <i class="caret"></i>
            <button aria-label="Preview"><svg width="46" height="40" viewBox="0 0 46 40"><path d="M1 20Q23-12 45 20 23 50 1 20z" fill="#fff" stroke="#222" stroke-width="3" /><circle cx="23" cy="20" r="13" fill="#2ba3cc" /><circle cx="23" cy="20" r="6" fill="#0a2a44" /><circle cx="20" cy="16" r="3" fill="#fff" /></svg></button>
            <i class="caret"></i>
            <button aria-label="Sketch"><svg width="46" height="46" viewBox="0 0 46 46"><path d="M3 8q10 2 6 16T5 38q6 8 18 2" fill="none" stroke="#433" stroke-width="4" /><path d="M15 30L34 4q9-1 10 6L28 38l-14 5z" fill="#e0322a" stroke="#811" /><path d="M15 30l13 8-14 5z" fill="#d9b66a" /><path d="M22 28L38 8" stroke="#ff9a90" stroke-width="3" /></svg></button>
            <span class="grow"></span>
            <button v-for="(p, i) in previews" :key="i" aria-label="Preview mode" class="mode wide"><svg width="46" height="48" viewBox="0 0 50 50" v-html="p" /></button>
            <button aria-label="Shaded preview" class="mode wide on"><svg width="48" height="48" viewBox="0 0 50 50" v-html="capsule('#c01212', '#7a0606')" /></button>
            <span class="rule mid"></span>
            <button v-for="(p, i) in previewsB" :key="'b' + i" aria-label="Preview mode" class="mode"><svg width="46" height="48" viewBox="0 0 50 50" fill="none" v-html="p" /></button>
            <span class="rule end"></span>
            <button aria-label="Mesh quality"><svg width="38" height="44" viewBox="0 0 38 38" preserveAspectRatio="none"><path d="M11 2h17l9 14-5 16-13 5L4 30 1 15z" fill="#5aa2ea" stroke="#1c4f9a" stroke-width="2" /><path d="M12 5h14l5 10-12 6-13-7z" fill="#a5d0fa" /></svg></button>
            <i class="caret last"></i>
          </div>

          <div class="canvas">
            <div class="group"></div>
            <div class="lines"></div>
            <svg class="wires" fill="none">
              <g transform="translate(-1499 -525)">
                <g stroke="#54437a" stroke-width="6">
                  <path d="M1499 611H1900M1499 712Q1512 747 1545 747M2343 620H2396M2751 1615L2815 1612M2754 1694C2790 1694 2780 1647 2815 1647M2967 1630L3034 1632" />
                  <g stroke-width="8"><path d="M2768 655H2882M2768 689C2840 689 2810 835 2882 835" /></g>
                  <g stroke-width="2" stroke="#9b89c6"><path d="M2768 655H2882M2768 689C2840 689 2810 835 2882 835" /></g>
                </g>
                <circle v-for="(g, i) in grips" :key="i" :cx="g[0]" :cy="g[1]" r="7" fill="#fff" stroke="#111" stroke-width="3" />
              </g>
            </svg>

            <article class="node panel p1">
              <h3>Panel</h3>
              <div class="yellow"><p class="path">{0;0;0;0}</p><p class="item"><span>0</span>37.624496</p></div>
            </article>

            <article v-for="n in nodes" :key="n.id" class="node comp" :class="n.id">
              <h3 v-if="n.id === 'model'">Model View (Karamba3D)</h3>
              <div class="ports">
                <ul class="in"><li v-for="p in n.inputs" :key="p">{{ p }}</li></ul>
                <svg width="44" height="48" viewBox="0 0 44 48" v-html="nodeIcons[n.id]" />
                <ul class="out"><li v-for="p in n.outputs" :key="p">{{ p }}</li></ul>
              </div>
              <template v-for="s in n.sections" :key="s.title">
                <h4>{{ s.title }}</h4>
                <div class="box">
                  <template v-for="(r, i) in s.rows" :key="i">
                    <label v-if="r.type === 'checkbox' || r.type === 'radio'" class="row">{{ r.label }}<input :type="r.type" :name="n.id + s.title + (r.type === 'radio' ? '' : i)" :checked="r.on" /></label>
                    <div v-else-if="r.type === 'range'" class="slide">
                      <input type="range" :value="r.v" :aria-label="s.rows[i - 1].label" :style="trackStyle(r)" />
                      <output :style="valueStyle(r)">{{ r.value }}</output>
                    </div>
                    <div v-else class="row">{{ r.label }}</div>
                  </template>
                </div>
              </template>
            </article>

            <article class="node legend">
              <h3>Legend</h3>
              <svg class="shape" width="296" height="546" viewBox="0 0 296 546">
                <defs><linearGradient id="leg" x1="0" y1="0" x2="0" y2="1"><stop offset="0" stop-color="#dcdce8" /><stop offset="0.03" stop-color="#abaaba" /><stop offset="1" stop-color="#8c8a9c" /></linearGradient></defs>
                <path :d="teeth" fill="url(#leg)" stroke="#3a3548" stroke-width="2" />
              </svg>
              <ul class="in"><li>Colour</li><li>Tags</li><li>Rectangle</li></ul>
              <ol><li v-for="l in legend" :key="l[1]" :style="{ background: l[1] }">{{ l[0] }}</li></ol>
            </article>

            <article class="node num n1">
              <h3>Number Slider</h3>
              <div class="numbody"><label for="s1">Number Slider</label><div><input id="s1" type="range" value="45" /><output>4500</output></div></div>
            </article>
            <article class="node num n2">
              <h3>Number Slider</h3>
              <div class="numbody"><label for="s2">Number Slider</label><div><input id="s2" type="range" value="20" /><output>200</output></div></div>
            </article>

            <article class="node div">
              <h3>Division</h3>
              <div class="divbody">
                <ul><li>A</li><li>B</li></ul>
                <svg width="32" height="32" viewBox="0 0 32 32"><rect x="1" y="1" width="30" height="30" rx="4" fill="#eee" stroke="#555" stroke-width="2" /><path d="M22 3L10 29" stroke="#111" stroke-width="3" /><text x="3" y="15" font-size="15" font-family="Liberation Sans, sans-serif" fill="#111">A</text><text x="18" y="29" font-size="15" font-family="Liberation Sans, sans-serif" fill="#111">B</text></svg>
                <span>Result</span>
              </div>
            </article>

            <article class="node panel p2">
              <h3>Panel</h3>
              <div class="yellow"><p class="path">{0}</p><p class="item"><span>0</span>22.5</p></div>
            </article>

            <svg class="compass" width="110" height="98" viewBox="0 0 110 98">
              <defs><radialGradient id="ball"><stop offset="0" stop-color="#fff" /><stop offset="1" stop-color="#b5b5b5" /></radialGradient></defs>
              <circle cx="58" cy="49" r="46" fill="#050505" />
              <circle cx="66" cy="49" r="46" fill="#d0cbbf" />
              <path d="M54 3l9-3 4 6zM50 95q18 5 32-6l-1-5z" fill="#050505" />
              <circle cx="64" cy="49" r="40" fill="url(#ball)" stroke="#222" stroke-width="1" />
              <circle cx="64" cy="49" r="38" fill="none" stroke="#fff" stroke-width="3" />
              <path d="M58 10h10l-5 12zM62 88l5-14 6 13zM26 50l10 4-10 7zM102 40l-10 5 10 6z" fill="#fff" />
              <path d="M0 54l9-8 9 8-9 9z" fill="#050505" />
            </svg>

            <div class="markov">
              <svg width="40" height="40" viewBox="0 0 50 50" v-html="tile('#aaa', slider)" />
              <svg width="44" height="40" viewBox="0 0 44 40"><g font-family="Liberation Sans, sans-serif" font-size="17" font-weight="bold"><text x="2" y="18" fill="#333">3</text><text x="2" y="37" fill="#111">1</text><text x="28" y="32" fill="#111">2</text><text x="28" y="13" fill="#777">4</text></g><path d="M13 13l14-5M13 15l13 9M11 32l15-4" stroke="#555" stroke-width="2" /></svg>
            </div>
          </div>

          <footer class="g-status">
            <svg width="34" height="34" viewBox="0 0 34 34"><circle cx="17" cy="17" r="16" fill="#1a62c4" stroke="#0a2f70" stroke-width="2" /><ellipse cx="17" cy="13" rx="6" ry="9" fill="#bfe0ff" /><ellipse cx="17" cy="13" rx="2" ry="5" fill="#1a4fa0" /><circle cx="17" cy="27" r="4" fill="#bfe0ff" /></svg>
            <span>Autosave complete (100 seconds ago)</span><small>1.0.0007</small>
          </footer>
        </section>
      </div>
      <p class="caption">Na utilização, o valor passou um pouco do esperado.</p>
    </main>
  </div>
</template>

<style>
body { background: #fff; }
</style>

<style scoped>
* { box-sizing: border-box; margin: 0; padding: 0; }
button { border: 0; background: none; font: inherit; color: inherit; flex: none; white-space: nowrap; }
button svg { display: block; }
ul, ol { list-style: none; }
.page { display: grid; grid-template-columns: 394px 1fr 350px; min-height: 100vh; font: 22px/30px "Open Sans", "Noto Sans", sans-serif; color: #222; }
.logo { width: 78px; height: 78px; margin: 92px 0 0 169px; }
.desk { min-width: 0; padding-top: 122px; }
.workspace { display: flex; }
.caption { padding: 30px 0 0 16px; font: 38px/58px Lato, "Open Sans", sans-serif; font-variant-ligatures: none; color: #1c1a1b; }

.rhino { flex: 1103 1 0; min-width: 0; overflow: hidden; display: flex; flex-direction: column; background: #ebecf0; white-space: nowrap; color: #444; font-size: 23px; }
.r-title { height: 48px; display: flex; align-items: center; gap: 9px; background: #fff; color: #9a9a9a; }
.r-menu { height: 46px; display: flex; gap: 23px; align-items: center; background: #fff; color: #777; border-bottom: 8px solid #eaeaea; padding-top: 2px; }
.r-log { height: 64px; background: #fff; padding-left: 5px; color: #222; border-bottom: 1px solid #aaa; line-height: 31px; }
.r-log p { height: 32px; }
.r-command { height: 37px; display: flex; align-items: center; background: #fff; padding: 0 0 4px 5px; font-weight: 700; color: #000; }
.r-command input { flex: 1; border: 0; outline: 0; font: inherit; }
.r-filters { height: 82px; margin-top: 6px; padding: 0 0 25px 8px; border: solid #cfd3de; border-width: 1px 0; display: grid; grid-template-columns: 205px 192px 203px 179px 114px 126px auto; align-items: center; font-size: 22px; }
.tick { display: flex; align-items: center; gap: 7px; }
.tick input { appearance: none; flex: none; width: 26px; height: 26px; border: 2px solid #333; background: #fff; }
.tick input:checked { position: relative; }
.tick input:checked::after { content: ""; position: absolute; left: 7px; top: 1px; width: 8px; height: 14px; border: solid #333; border-width: 0 2px 2px 0; transform: rotate(42deg); }
.tick input:disabled { border-color: #ccc; background: #e4e4e6; }
.r-tabs { flex: none; display: flex; height: 38px; padding-left: 3px; }
.r-tabs button { padding: 0 27px 0 23px; border-bottom: 1px solid #c5cad8; color: #555; }
.r-tabs .active { padding: 0 26px 0 22px; border: 1px solid #c5cad8; border-bottom: 0; border-radius: 12px 6px 0 0; }
.r-toolbar { height: 77px; padding: 8px 7px 0 6px; display: flex; justify-content: space-between; align-items: flex-start; }
.r-body { flex: 1; display: flex; min-height: 0; }
.r-tools { width: 94px; flex: none; display: grid; grid-template-columns: 46px 46px; grid-auto-rows: 46px; align-content: start; padding-top: 13px; background: linear-gradient(#cdd3e2, #cdd3e2) 0 6px / 84px 1px no-repeat, linear-gradient(#cdd3e2, #cdd3e2) 0 10px / 84px 1px no-repeat; overflow: hidden; }
.r-tools button { display: grid; place-items: center; margin-left: -10px; width: 46px; }
.viewport { flex: 1; position: relative; overflow: hidden; background: linear-gradient(#989898, #a2a3a6 30%, #a0a1a3 80%, #999a9c); border-left: 1px solid #b8bfd0; }
.scene { position: absolute; inset: 0; width: 100%; height: 100%; }
.view-label { position: absolute; left: 0; top: 0; width: 173px; height: 37px; padding-left: 16px; background: #839df5; color: #1d2c58; font-size: 22px; display: flex; align-items: center; justify-content: space-between; }
.view-label button { width: 22px; height: 33px; border-left: 2px solid #4a5f9f; display: grid; place-items: center; }
.view-label button::after { content: ""; border: 7px solid #0000; border-top: 8px solid #1d2c4a; margin-top: 6px; }
.axis-yz, .axis-x { position: absolute; left: 64px; top: 999px; color: #666; font: 25px/30px "Liberation Sans", Arial, sans-serif; }
.axis-x { left: 135px; top: 1033px; }
.r-viewtabs { display: flex; height: 44px; padding-left: 94px; color: #555; }
.r-viewtabs button { padding: 0 34px 0 0; }
.r-viewtabs .active { padding: 0 13px 0 20px; margin-right: 24px; border: 1px solid #c5cad8; border-top: 0; border-radius: 0 0 4px 18px; }
.r-snaps { height: 69px; display: flex; align-items: center; gap: 14px; padding-left: 7px; font-size: 22px; }
.r-snaps .tick { flex: none; }
.r-status { height: 32px; border-top: 1px solid #c5cad8; display: grid; grid-template-columns: 86px repeat(4, 176px) auto; line-height: 31px; font-size: 22px; }
.r-status span { border-right: 1px solid #cdd3e2; text-align: center; }
.r-status span:first-child { text-align: left; }
.r-status span:last-child { border: 0; display: flex; align-items: center; gap: 5px; padding-left: 8px; }
.r-status i { width: 22px; height: 22px; background: #000; }

.gh { flex: 1993 1 0; min-width: 0; display: flex; flex-direction: column; border-left: 2px solid #777; border-top: 2px solid #666; background: #f0f0f0; overflow: hidden; font-size: 24px; position: relative; box-shadow: -6px 0 12px #0003; }
.g-title { height: 62px; padding: 0 25px 0 14px; background: #fff; display: flex; align-items: center; justify-content: space-between; font-size: 23px; }
.g-title div { display: flex; gap: 76px; }
.g-menu { height: 55px; padding: 0 6px 2px 24px; display: flex; align-items: center; gap: 33px; background: linear-gradient(90deg, #f0f0f0, #fbfbfb); }
.g-menu span { margin-left: auto; font-size: 23px; }
.g-tabs { height: 47px; display: flex; font: 21px/24px "Liberation Sans", Arial, sans-serif; color: #7c7c7c; border-bottom: 2px solid #a5a5a5; overflow: hidden; }
.g-tabs button { min-width: 58px; padding: 3px 17px 0; }
.g-tabs .active { min-width: 71px; margin: 0 3px -2px 0; padding: 0 14px; color: #222; background: linear-gradient(#fff 60%, #d8d8d8); border: 2px solid #aaa; border-width: 2px 2px 0 0; border-radius: 14px 14px 0 0; }
.g-ribbon { height: 175px; padding: 3px 0 0 6px; display: flex; gap: 9px; align-items: flex-start; background: linear-gradient(#d2d2d2, #efefef 80%); border-bottom: 3px solid #777; }
.defs { position: absolute; }
.g-panel { border: 2px solid #8d8d8d; border-bottom: 0; border-radius: 9px; overflow: hidden; background: linear-gradient(#e6e6e6, #d8d8d8 50%, #e8e8e8); flex: none; }
.g-cells { display: flex; height: 118px; padding: 0 2px; }
.g-col { width: 57px; display: flex; flex-direction: column; }
.g-col button { height: 57px; display: grid; place-items: center; }
.g-sep { width: 2px; margin: 12px 8px 12px 9px; background: linear-gradient(#ccc0, #aaa, #ccc0); }
.g-name { height: 28px; background: linear-gradient(#2c2c2c, #161616); color: #fff; display: flex; align-items: center; justify-content: space-between; padding: 0 4px 2px 0; font: 20px/24px "Liberation Sans", Arial, sans-serif; }
.g-name span { flex: 1; text-align: center; }
.g-bar { height: 62px; display: flex; align-items: center; padding: 0 0 2px 9px; background: linear-gradient(#fff, #f5f5f5); }
.save { margin-left: 16px; }
.rule { width: 2px; height: 44px; background: #ccc; margin: 0 8px 0 13px; flex: none; }
.rule.mid { margin: 0 14px 0 11px; }
.rule.end { margin: 0 11px 0 6px; }
.zoom { position: relative; width: 293px; margin-right: 10px; }
.zoom select { appearance: none; width: 100%; height: 45px; border: 2px solid #777; background: #fff; padding-left: 6px; font: 23px/30px "Open Sans", sans-serif; color: #222; }
.zoom svg { position: absolute; right: 9px; top: 19px; }
.caret { border: 5px solid #0000; border-top: 7px solid #111; margin: 6px 13px 0; flex: none; }
.grow { flex: 1; }
.mode { width: 54px; height: 54px; display: grid; place-items: center; }
.mode.wide { margin-right: 3px; }
.mode.on { border: 2px solid #2a86c8; background: #e8f3fb; }
.caret.last { margin: 6px -2px 0 7px; }

.canvas { position: relative; height: 1235px; overflow: hidden; background: repeating-linear-gradient(135deg, #d2cdc1 0 4px, #cac5b9 4px 6px); font: 18px/24px "Open Sans", "Noto Sans", sans-serif; color: #1c1c1c; }
.group { position: absolute; left: 0; top: 0; width: 1691px; height: 100%; background: repeating-linear-gradient(135deg, #baa3e7 0 4px, #b69fe3 4px 6px); border-right: 2px solid #9d8ac4; }
.lines { position: absolute; inset: 0; background: repeating-linear-gradient(#0000 0 85px, #4a3a7022 85px 87px) 0 -15px / 100% 1740px, repeating-linear-gradient(90deg, #0000 0 259px, #4a3a7022 259px 261px) -225px 0 / 2610px 100%; }
.wires { position: absolute; left: 0; top: 0; width: 100%; height: 100%; }
.node { position: absolute; white-space: nowrap; }
.node h3 { position: absolute; left: -60px; right: -60px; top: -34px; text-align: center; font: italic 23px/30px "Open Sans", "Noto Sans", sans-serif; color: #443a5c; }
.model h3 { top: -36px; }
.p1 { left: 46px; top: 135px; width: 279px; height: 174px; }
.p2 { left: 1535px; top: 1049px; width: 117px; height: 118px; }
.yellow { height: 100%; border: 2px solid #55502a; border-radius: 6px; background: linear-gradient(#d6d34c 32px, #fffa58 32px); overflow: hidden; font: 19px/26px "Liberation Mono", monospace; }
.path { text-align: right; padding-right: 22px; height: 30px; font-size: 18px; color: #444; }
.item { display: flex; gap: 9px; padding: 0 0 0 7px; }
.item span { width: 11px; }
.comp { border: 2px solid #444; border-radius: 7px; background: linear-gradient(#f4f4f4, #e0e0e0 16px, #dcdcdc); }
.model { left: 401px; top: 66px; width: 443px; height: 1180px; }
.beam { left: 897px; top: 5px; width: 372px; height: 908px; }
.ports { display: flex; align-items: center; }
.ports ul, .ports svg { flex: none; }
.model .ports { height: 215px; padding: 0 0 5px 7px; }
.model .in { width: 212px; text-align: right; line-height: 35px; }
.model .ports svg { margin: 0 8px 0 7px; }
.model .out { line-height: 52px; }
.beam .ports { height: 181px; padding: 0 0 4px 10px; }
.beam .in { width: 56px; }
.beam .ports svg { margin: 0 4px 0 9px; }
.beam .out { line-height: 35px; }
.comp h4 { height: 30px; border: 2px solid #1d1d1d; border-radius: 4px; background: linear-gradient(#8a8a8a, #3c3c3c 45%, #454545); color: #fff; text-align: center; font: bold 20px/22px "Liberation Sans", Arial, sans-serif; }
.box { margin: 6px 4px; padding-right: 3px; border: 2px solid #777; border-radius: 6px; background: linear-gradient(#f4f4f4, #e4e4e4 18px, #c8c8c8); font: 21px/30px "Liberation Sans", Arial, sans-serif; }
.model .box { padding-bottom: 3px; }
.row { height: 35px; display: flex; align-items: center; justify-content: space-between; padding: 0 0 4px 7px; }
.row input { appearance: none; width: 20px; height: 20px; border: 3px solid #111; background: #fff; margin-top: 8px; }
.row input:checked { background: #111; box-shadow: inset 0 0 0 2px #eee; }
.row input[type="radio"] { border-radius: 50%; }
.slide { height: 36px; position: relative; margin-right: -1px; }
.slide input, .numbody input { appearance: none; display: block; background: none; }
.slide input { position: absolute; left: 2px; top: 9px; width: calc(100% - 6px); height: 18px; background: linear-gradient(#999, #999) 8px 50% / 1px 12px no-repeat, linear-gradient(#999, #999) calc(100% - 8px) 50% / 1px 12px no-repeat, linear-gradient(90deg, #0000 9px, #aaa 9px var(--a), #0000 var(--a) var(--b), #aaa var(--b) calc(100% - 9px), #0000 0) 0 50% / 100% 2px no-repeat; }
.slide input::-webkit-slider-thumb { appearance: none; width: 18px; height: 18px; border: 3px solid #111; border-radius: 50%; background: #fff; }
.slide output { position: absolute; top: 3px; font-style: italic; }
.legend { left: 1383px; top: 38px; width: 296px; height: 546px; display: flex; }
.legend h3 { left: 0; right: 10px; }
.shape { position: absolute; left: 0; top: 0; }
.legend .in { position: relative; width: 97px; text-align: right; line-height: 180px; }
.legend ol { position: relative; width: 170px; margin: 10px 0 0 11px; height: 528px; border: 2px solid #111; background: #111; display: flex; flex-direction: column; gap: 2px; }
.legend ol li { flex: 1; border: 1px solid #fff9; padding-left: 15px; font-size: 17px; line-height: 35px; color: #222c; }
.legend ol li:first-child { padding-left: 8px; }
.n1 { left: 898px; top: 1071px; width: 354px; height: 38px; }
.n2 { left: 902px; top: 1151px; width: 354px; height: 38px; }
.numbody { display: grid; grid-template-columns: 143px 1fr; height: 100%; border: 2px solid #444; border-radius: 6px; overflow: hidden; background: linear-gradient(#f2f2f2, #cfcfcf); }
.numbody label { padding-left: 10px; line-height: 33px; border-right: 2px solid #333; background: linear-gradient(#c9c9d4, #8e8e9e); }
.numbody div { position: relative; padding: 0 16px; }
.numbody input { width: 100%; height: 34px; background: linear-gradient(#bbb, #bbb) 0 18px / 100% 1px no-repeat, repeating-linear-gradient(90deg, #bbb 0 1px, #0000 1px 17px) 0 10px / 100% 8px no-repeat; }
.numbody input::-webkit-slider-thumb { appearance: none; width: 10px; height: 10px; border: 2px solid #111; background: #fff; transform: rotate(45deg); }
.numbody output { position: absolute; left: 107px; top: 5px; background: #e0e0e0; padding-right: 4px; line-height: 24px; }
.n2 .numbody output { left: 64px; }
.div { left: 1316px; top: 1066px; width: 152px; height: 78px; }
.divbody { height: 100%; display: flex; align-items: center; padding-left: 9px; border: 2px solid #333; border-radius: 6px; background: linear-gradient(#dcdce4, #a8a8b6 20px, #8e8c9e); }
.divbody ul { width: 26px; line-height: 35px; }
.divbody span { margin-left: 12px; }
.compass { position: absolute; right: 3px; top: 1117px; }
.markov { position: absolute; left: 0; top: 1178px; width: 130px; height: 56px; padding-left: 9px; display: flex; align-items: center; gap: 18px; border: 2px solid #222; border-left: 0; background: linear-gradient(90deg, #a8a8a8, #ccc 88%, #777 88%); }
.g-status { height: 42px; display: flex; align-items: center; gap: 7px; padding: 4px 57px 0 6px; border-top: 4px solid #fdfdfd; background: #efefef; font-size: 23px; }
.g-status small { margin-left: auto; font-size: 22px; color: #777; }
</style>
